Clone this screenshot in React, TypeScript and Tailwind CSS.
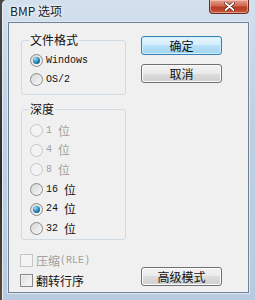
import React from 'react';

const CJK = 'font-["Noto_Sans_CJK_SC","Liberation_Sans",sans-serif]';
const MONO = 'font-["Liberation_Mono","Noto_Sans_CJK_SC",monospace]';

const Radio: React.FC<{ checked?: boolean; disabled?: boolean }> = ({ checked, disabled }) => (
  <span
    className={
      'w-[13px] h-[13px] rounded-full border flex items-center justify-center shrink-0 ' +
      (disabled
        ? 'border-[#c6c6c6] bg-[#f4f4f4]'
        : 'border-[#8b8b8b] bg-[linear-gradient(135deg,#d6d6d6,#f8f8f8)]')
    }
  >
    {checked && (
      <span className="w-[7px] h-[7px] rounded-full bg-[radial-gradient(circle_at_35%_30%,#9be3ff_0%,#2c8ec2_45%,#0d3f63_100%)]" />
    )}
  </span>
);

const Check: React.FC<{ disabled?: boolean }> = ({ disabled }) => (
  <span
    className={
      'w-[13px] h-[13px] border shrink-0 ' +
      (disabled
        ? 'border-[#c6c6c6] bg-[#f4f4f4]'
        : 'border-[#8b8b8b] bg-[linear-gradient(135deg,#dcdcdc,#fbfbfb)] shadow-[inset_0_0_0_1px_#f0f0f0]')
    }
  />
);

// digits in mono, CJK glyph in sans
const Label: React.FC<{ ascii?: string; cjk?: string; disabled?: boolean; order?: 'ac' | 'ca' }> = ({ ascii, cjk, disabled, order = 'ac' }) => {
  const a = ascii ? <span className={`${MONO} text-[10px]`}>{ascii}</span> : null;
  const c = cjk ? <span className={`${CJK} text-[12px]`}>{cjk}</span> : null;
  return (
    <span className={`flex items-center whitespace-pre leading-none ${disabled ? 'text-[#a0a0a0]' : 'text-[#111]'}`}>
      {order === 'ac' ? <>{a}{c}</> : <>{c}{a}</>}
    </span>
  );
};

const Button: React.FC<{ label: string; primary?: boolean; className?: string }> = ({ label, primary, className = '' }) => (
  <button
    className={
      `w-[81px] h-[19px] rounded-[3px] border flex items-center justify-center text-[12px] leading-none text-[#111] ${CJK} ` +
      (primary
        ? 'border-[#3c7fb1] bg-[linear-gradient(#e5f4fc_0%,#d4eefb_50%,#b9e2f8_50%,#a2d4f1_100%)] shadow-[inset_0_0_0_1px_#c9f0ff] '
        : 'border-[#707070] bg-[linear-gradient(#f2f2f2_0%,#ebebeb_50%,#dddddd_50%,#cfcfcf_100%)] shadow-[inset_0_0_0_1px_#fbfbfb] ') +
      className
    }
  >
    {label}
  </button>
);

export default function App() {
  return (
    <div className="w-[255px] h-[300px] overflow-hidden bg-[linear-gradient(#4a4a4a,#2a2a2a_60%,#5a4a3a)] pl-[2px]">
      <div className="w-[253px] h-full flex flex-col bg-[linear-gradient(#d3e0ee,#bfd0e3_40%,#b9cbe0)] rounded-tl-[5px] shadow-[inset_1px_0_0_#e8eef6]">
        {/* title bar */}
        <div className="h-[22px] flex items-start">
          <span className={`${CJK} text-[12px] leading-none text-[#1a1a1a] mt-[5px] ml-[8px] [text-shadow:0_0_6px_#ffffff,0_0_3px_#ffffff]`}>
            BMP 选项
          </span>
          <div className="ml-auto mr-[6px] w-[40px] h-[14px] rounded-b-[4px] border border-t-0 border-[#6b2a22] bg-[linear-gradient(#e6a08f,#d0674f_45%,#b83a22_55%,#c7563a)] shadow-[inset_0_0_0_1px_rgba(255,220,210,0.5)] flex items-center justify-center">
            <svg width="11" height="9" viewBox="0 0 11 9">
              <path d="M1.5 1 L9.5 8 M9.5 1 L1.5 8" stroke="#5a1a10" strokeWidth="3.2" strokeLinecap="round" />
              <path d="M1.5 1 L9.5 8 M9.5 1 L1.5 8" stroke="#ffffff" strokeWidth="1.8" strokeLinecap="round" />
            </svg>
          </div>
        </div>

        {/* client */}
        <div className="flex-1 flex px-[6px] pb-[7px]">
          <div className="flex-1 flex bg-[#f0f0f0] border border-[#6f8296] shadow-[0_0_0_1px_#dfe8f2] pl-[11px]">
            {/* left column */}
            <div className="w-[107px] flex flex-col pt-[10px]">
              <fieldset className="ml-[1px] w-[105px] border border-[#d0dae2] rounded-[3px] px-[8px] pt-[4px] pb-[5px]">
                <legend className={`${CJK} text-[12px] leading-[14px] ml-[-1px] px-[1px] text-[#111]`}>文件格式</legend>
                <div className="h-[19px] flex items-center gap-[3px]">
                  <Radio checked />
                  <Label ascii="Windows" />
                </div>
                <div className="h-[19px] flex items-center gap-[3px]">
                  <Radio />
                  <Label ascii="OS/2" />
                </div>
              </fieldset>

              <fieldset className="ml-[1px] mt-[7px] w-[105px] border border-[#d0dae2] rounded-[3px] px-[8px] pt-[5px] pb-0">
                <legend className={`${CJK} text-[12px] leading-[14px] ml-[-1px] px-[1px] text-[#111]`}>深度</legend>
                {[
                  { n: '1 ', d: true },
                  { n: '4 ', d: true },
                  { n: '8 ', d: true },
                  { n: '16 ', d: false },
                  { n: '24 ', d: false, c: true },
                  { n: '32 ', d: false },
                ].map((r, i) => (
                  <div key={i} className="h-[19.6px] flex items-center gap-[3px]">
                    <Radio checked={r.c} disabled={r.d} />
                    <Label ascii={r.n} cjk="位" disabled={r.d} />
                  </div>
                ))}
              </fieldset>

              <div className="mt-[11px] h-[20px] flex items-center gap-[3px]">
                <Check disabled />
                <Label cjk="压缩" ascii="(RLE)" order="ca" disabled />
              </div>
              <div className="h-[20px] flex items-center gap-[3px]">
                <Check />
                <Label cjk="翻转行序" />
              </div>
            </div>

            {/* right column */}
            <div className="ml-[14px] flex flex-col pt-[13px] pb-[6px]">
              <Button label="确定" primary />
              <Button label="取消" className="mt-[9px]" />
              <Button label="高级模式" className="mt-auto" />
            </div>
          </div>
        </div>
      </div>
    </div>
  );
}
